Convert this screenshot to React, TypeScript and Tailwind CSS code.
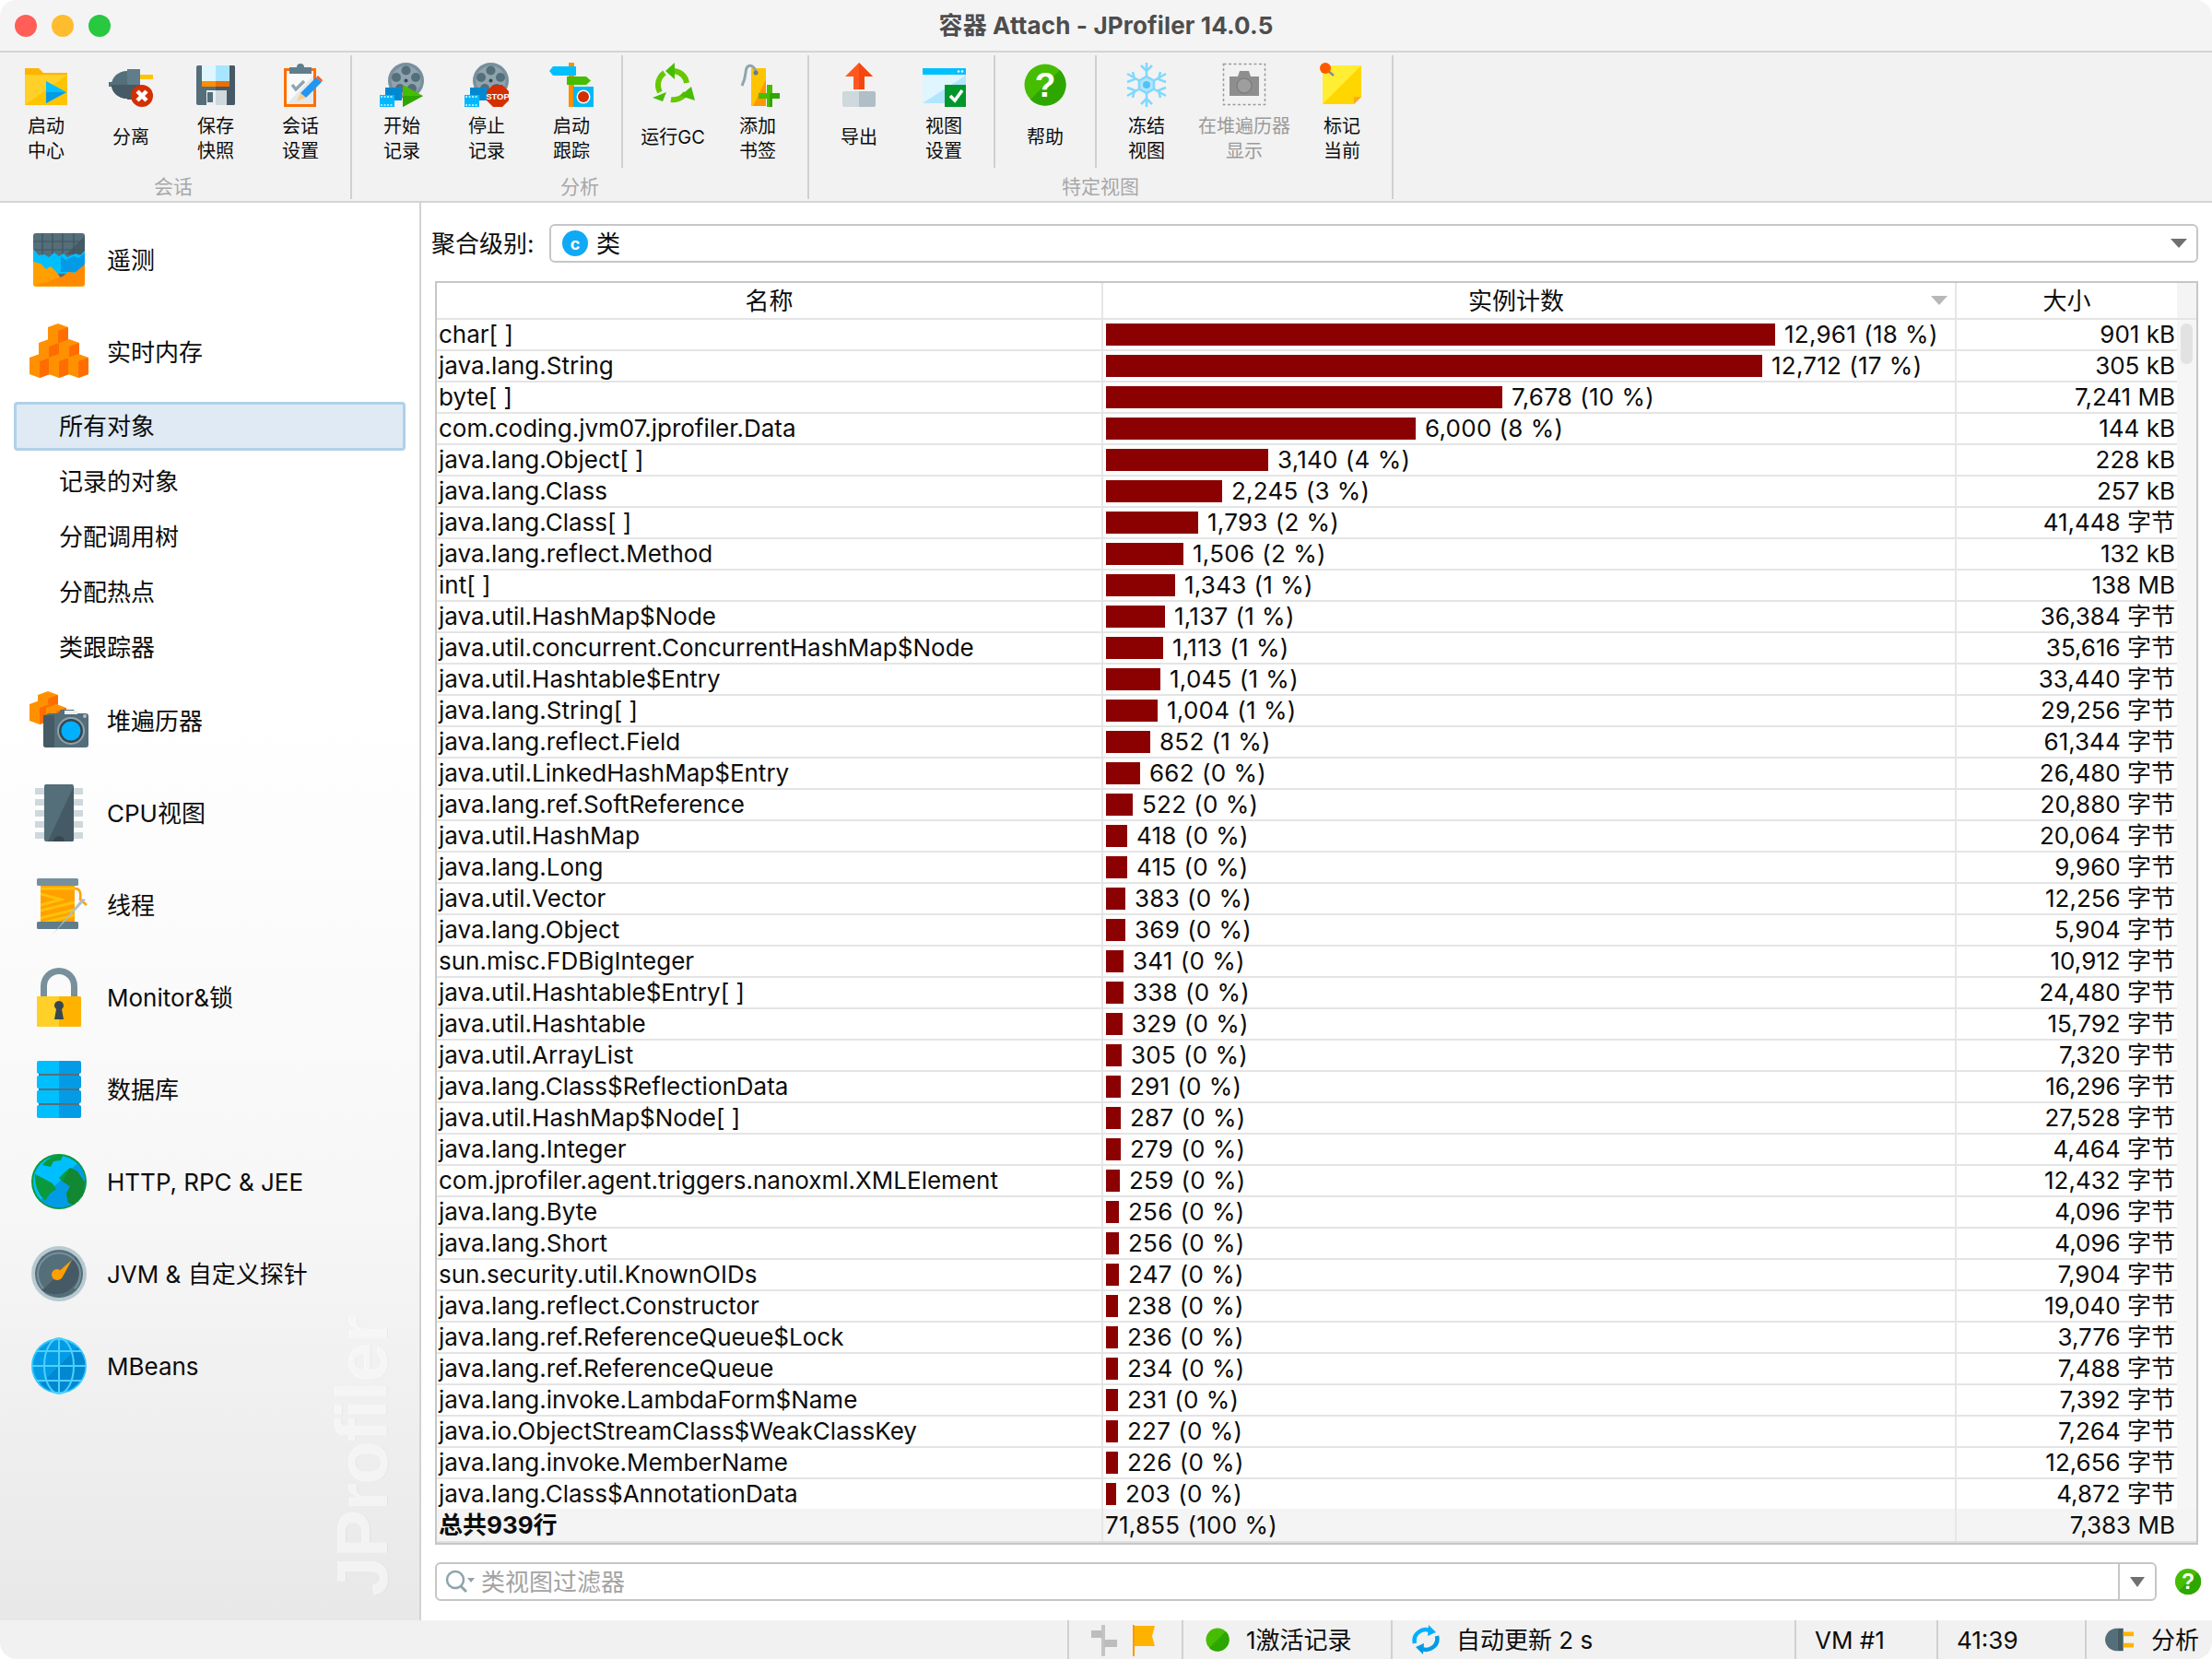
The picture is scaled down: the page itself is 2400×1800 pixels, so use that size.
import React from 'react';

const Folder = () => (
  <svg viewBox="0 0 48 48" className="w-12 h-12">
    <path d="M1 6h15l5 5h26v35H1z" fill="#ffb300" />
    <path d="M1 13h46v33H1z" fill="#ffd028" />
    <path d="M47 13v33H1z" fill="#ffc400" />
    <path d="M24 20l22 12-22 12z" fill="#00bfff" />
    <path d="M24 44l22-12H24z" fill="#039be5" />
  </svg>
);

const Unplug = () => (
  <svg viewBox="0 0 48 48" className="w-12 h-12">
    <path d="M34 13h14v5H34z" fill="#ffc400" />
    <path d="M0 21h4v5H0z" fill="#546e7a" />
    <path d="M20 9C10 9 3 16 3 24s7 15 17 15z" fill="#546e7a" />
    <path d="M3 24c0 8 7 15 17 15V24z" fill="#455a64" />
    <path d="M20 7h14v33H20z" fill="#607d8b" />
    <path d="M20 24h14v16H20z" fill="#455a64" />
    <circle cx="36" cy="36" r="12" fill="#d32f00" />
    <path d="M31 31l10 10M41 31L31 41" stroke="#fff" strokeWidth="4.5" />
  </svg>
);

const Floppy = () => (
  <svg viewBox="0 0 48 48" className="w-12 h-12">
    <path d="M5 3h38a2 2 0 0 1 2 2v39a2 2 0 0 1-2 2H5a2 2 0 0 1-2-2V5a2 2 0 0 1 2-2z" fill="#546e7a" />
    <path d="M24 3h19a2 2 0 0 1 2 2v39a2 2 0 0 1-2 2H24z" fill="#455a64" />
    <path d="M9 3h15v17H9z" fill="#dff6ff" />
    <path d="M24 3h15v17H24z" fill="#a8e6ff" />
    <path d="M9 20h15v6H9z" fill="#ff8f00" />
    <path d="M24 20h15v6H24z" fill="#ef6c00" />
    <path d="M14 30h22v16H14z" fill="#cfd8dc" />
    <path d="M14 30h10v16H14z" fill="#eceff1" />
    <path d="M15 32h6v11h-6z" fill="#546e7a" />
  </svg>
);

const Clipboard = () => (
  <svg viewBox="0 0 48 48" className="w-12 h-12">
    <path d="M6 6h35v42H6z" fill="#ff6f00" />
    <path d="M9 9h29v36H9z" fill="#fafafa" />
    <path d="M38 14v31H9z" fill="#e6e9eb" />
    <path d="M12 5h8a4 4 0 0 1 8 0h8v7H12z" fill="#607d8b" />
    <path d="M15 24l4 5 9-9" fill="none" stroke="#90a4ae" strokeWidth="3.5" />
    <path d="M24 33l17-17 6 5-17 17z" fill="#2196f3" />
    <path d="M41 16l2-2 5 5-1 2z" fill="#ff5722" />
    <path d="M24 33l6 5-10 4z" fill="#ffcc80" />
  </svg>
);

const Reel = () => (
  <g>
    <circle cx="28.5" cy="19.5" r="19.5" fill="#78909c" />
    <circle cx="28.5" cy="19.5" r="16" fill="#90a4ae" />
    <circle cx="28.5" cy="8.5" r="5" fill="#546e7a" />
    <circle cx="18" cy="16" r="5" fill="#546e7a" />
    <circle cx="39" cy="16" r="5" fill="#546e7a" />
    <circle cx="22" cy="28" r="5" fill="#546e7a" />
    <circle cx="35" cy="28" r="5" fill="#546e7a" />
    <circle cx="28.5" cy="19.5" r="2" fill="#37474f" />
    <path d="M6 27h18v14H6z" fill="#0288d1" />
    <path d="M0 35h16v13H0z" fill="#00b8ff" />
    <path d="M1 37h14M1 46h14" stroke="#e1f5fe" strokeWidth="1.5" strokeDasharray="2 1.5" />
  </g>
);

const RecStart = () => (
  <svg viewBox="0 0 48 48" className="w-12 h-12">
    <Reel />
    <path d="M25 24l22 12-22 12z" fill="#46bd00" />
    <path d="M25 48l22-12H25z" fill="#2ea600" />
  </svg>
);

const RecStop = () => (
  <svg viewBox="0 0 48 48" className="w-12 h-12">
    <Reel />
    <path d="M31 24h10l7 7v10l-7 7H31l-7-7V31z" fill="#d32f00" />
    <text x="36" y="39.5" textAnchor="middle" fontSize="9.5" fontWeight="700" fill="#fff" fontFamily="Liberation Sans">STOP</text>
  </svg>
);

const Signpost = () => (
  <svg viewBox="0 0 48 48" className="w-12 h-12">
    <path d="M21 0h6v48h-6z" fill="#ff8f00" />
    <path d="M4 4h25v10H4l-4-5z" fill="#00bfff" />
    <path d="M19 15h21l5 4.500-5 4.500H19z" fill="#46bd00" />
    <path d="M26 26h22v22H26z" fill="#00b8f5" />
    <circle cx="37" cy="37" r="7.500" fill="#fff" />
    <circle cx="37" cy="37" r="6" fill="#d32f00" />
  </svg>
);

const RunGc = () => (
  <svg viewBox="0 0 48 48" className="w-12 h-12" fill="none">
    <path d="M25 9a15 15 0 0 1 14 13" stroke="#66c800" strokeWidth="6" />
    <path d="M22 40a16 16 0 0 0 16-7" stroke="#66c800" strokeWidth="6" />
    <path d="M15 11a16 16 0 0 0-5 21" stroke="#66c800" strokeWidth="6" />
    <path d="M16 9l10-9v18z" fill="#46bd00" />
    <path d="M48 41l-4-15-12 10z" fill="#46bd00" />
    <path d="M2 38l15-6-4 10z" fill="#46bd00" />
  </svg>
);

const Bookmark = () => (
  <svg viewBox="0 0 48 48" className="w-12 h-12">
    <path d="M17 6h16v41H17z" fill="#ffc400" />
    <path d="M33 18v29H19z" fill="#ff9800" />
    <path d="M22 10C20 2 14 2 12 6c-2 5 0 10-5 19" fill="none" stroke="#90a4ae" strokeWidth="3" />
    <circle cx="22" cy="11" r="2.500" fill="#607d8b" />
    <path d="M34 24h6v9h9v6h-9v9h-6v-9h-9v-6h9z" fill="#46bd00" />
    <path d="M37 33h12v6h-9v9h-3z" fill="#2ea600" />
  </svg>
);

const ExportIcon = () => (
  <svg viewBox="0 0 48 48" className="w-12 h-12">
    <path d="M24 0l15 15h-9v14H18V15H9z" fill="#ff5722" />
    <path d="M24 0l15 15h-9v14h-6z" fill="#f4470f" />
    <path d="M6 33a2 2 0 0 1 2-2h16v17H8a2 2 0 0 1-2-2z" fill="#cfd8dc" />
    <path d="M24 31h16a2 2 0 0 1 2 2v13a2 2 0 0 1-2 2H24z" fill="#b0bec5" />
  </svg>
);

const ViewSettings = () => (
  <svg viewBox="0 0 48 48" className="w-12 h-12">
    <path d="M1 6h48v38H1z" fill="#dff6ff" />
    <path d="M49 13v31H1z" fill="#b3e5fc" />
    <path d="M1 6h48v7H1z" fill="#00bfff" />
    <circle cx="40" cy="9.500" r="1.200" fill="#fff" />
    <circle cx="44" cy="9.500" r="1.200" fill="#fff" />
    <path d="M25 24h24v24H25z" fill="#00962e" />
    <path d="M31 36l5 5 8-11" fill="none" stroke="#fff" strokeWidth="3.500" />
  </svg>
);

const Help = ({ className }: { className: string }) => (
  <svg viewBox="0 0 48 48" className={className}>
    <circle cx="24" cy="24" r="22.500" fill="#46bd00" />
    <path d="M40 8A22.500 22.500 0 0 1 8 40z" fill="#2ea600" />
    <text x="24" y="37" textAnchor="middle" fontSize="37" fontWeight="700" fill="#fff" fontFamily="Liberation Sans">?</text>
  </svg>
);

const Snow = () => (
  <svg viewBox="0 0 48 48" className="w-12 h-12" fill="none" stroke="#80d8ff" strokeWidth="2.500">
    <path d="M24 0v48M3 12l42 24M45 12L3 36" />
    <path d="M18 3l6 6 6-6M18 45l6-6 6 6M3 21l8-3-2-8M45 21l-8-3 2-8M3 27l8 3-2 8M45 27l-8 3 2 8" />
    <path d="M24 15l8 4.500v9L24 33l-8-4.500v-9z" fill="#b3e5fc" />
    <circle cx="24" cy="24" r="4" fill="#4fc3f7" stroke="none" />
  </svg>
);

const CameraOff = () => (
  <svg viewBox="0 0 48 48" className="w-12 h-12">
    <rect x="1.500" y="1.500" width="45" height="44" fill="none" stroke="#9a9a9a" strokeWidth="1.500" strokeDasharray="3 2.500" />
    <path d="M8 15h9l2-6h10l2 6h9v21H8z" fill="#8e8e8e" />
    <circle cx="24" cy="25" r="8" fill="#9e9e9e" stroke="#808080" strokeWidth="1.500" />
  </svg>
);

const Note = () => (
  <svg viewBox="0 0 48 48" className="w-12 h-12">
    <path d="M3 3h42v34l-8 8H3z" fill="#ffee33" />
    <path d="M45 3v34l-8 8H3z" fill="#ffd600" />
    <path d="M37 37h8l-8 8z" fill="#ffa726" />
    <path d="M8 8l7 6" stroke="#78909c" strokeWidth="2.500" />
    <circle cx="6" cy="6" r="6" fill="#ff5a00" />
  </svg>
);

const Telemetry = () => (
  <svg viewBox="0 0 64 64" className="w-16 h-16">
    <path d="M7 3h50a3 3 0 0 1 3 3v51a3 3 0 0 1-3 3H7a3 3 0 0 1-3-3V6a3 3 0 0 1 3-3z" fill="#546e7a" />
    <path d="M60 6v20H40z" fill="#455a64" />
    <path d="M14 3v26M25 3v26M36 3v26M48 3v26M4 12h56M4 21h56" stroke="#3f545e" strokeWidth="1.200" />
    <path d="M4 20l6 7 6-1 5 3 6-5 5 4 5-3 4 4 9-4 5 2 5-5v25H4z" fill="#00bfff" />
    <path d="M34 28l5 4 9-4 5 2 7-5v20H34z" fill="#039be5" />
    <path d="M4 34l8 2 6 6 5-3 7 7 6 9 6-6 7 1 8-7 3-7v22a3 3 0 0 1-3 3H7a3 3 0 0 1-3-3z" fill="#ffa000" />
    <path d="M60 37v20a3 3 0 0 1-3 3H6L36 50l6-5 7 1z" fill="#ff8a00" />
  </svg>
);

const Cube = ({ x, y }: { x: number; y: number }) => (
  <g transform={`translate(${x} ${y})`}>
    <path d="M11 0l11 4v18l-11 4-11-4V4z" fill="#ff9100" />
    <path d="M22 4v18l-11 4V8z" fill="#ff6d00" />
  </g>
);

const Memory = () => (
  <svg viewBox="0 0 64 64" className="w-16 h-16">
    <Cube x={20} y={1} />
    <Cube x={10} y={18} />
    <Cube x={32} y={18} />
    <Cube x={0} y={34} />
    <Cube x={21} y={34} />
    <Cube x={42} y={34} />
  </svg>
);

const Heap = () => (
  <svg viewBox="0 0 64 64" className="w-16 h-16">
    <Cube x={9} y={0} />
    <Cube x={0} y={10} />
    <Cube x={18} y={14} />
    <path d="M18 27a3 3 0 0 1 3-3h10l3-4h14l3 4h10a3 3 0 0 1 3 3v31a3 3 0 0 1-3 3H18a3 3 0 0 1-3-3V27z" fill="#546e7a" />
    <path d="M15 26h12v35h-9a3 3 0 0 1-3-3z" fill="#455a64" />
    <path d="M38 21h14v4H38z" fill="#eceff1" />
    <circle cx="45" cy="43" r="15" fill="#90a4ae" />
    <circle cx="45" cy="43" r="13" fill="#37474f" />
    <circle cx="45" cy="43" r="10.500" fill="#00b0ff" />
    <circle cx="60" cy="27" r="2" fill="#b0bec5" />
  </svg>
);

const Chip = () => (
  <svg viewBox="0 0 64 64" className="w-16 h-16">
    <path d="M6 5h10v7H6zM6 17h10v7H6zM6 29h10v7H6zM6 41h10v7H6zM6 53h10v7H6zM48 5h10v7H48zM48 17h10v7H48zM48 29h10v7H48zM48 41h10v7H48zM48 53h10v7H48z" fill="#cfd8dc" />
    <path d="M18 1h28a2 2 0 0 1 2 2v58a2 2 0 0 1-2 2H18a2 2 0 0 1-2-2V3a2 2 0 0 1 2-2z" fill="#546e7a" />
    <path d="M48 3v58a2 2 0 0 1-2 2H20z" fill="#455a64" />
    <path d="M26 63a6 6 0 0 1 12 0z" fill="#37474f" />
  </svg>
);

const Spool = () => (
  <svg viewBox="0 0 64 64" className="w-16 h-16">
    <path d="M12 10h37v48H12z" fill="#ffa000" />
    <path d="M12 14l37 0M12 20l22 6-22 6M12 38l37-9M12 46l37-9M12 52l37-9" stroke="#ffc107" strokeWidth="3" fill="none" />
    <rect x="8" y="3" width="45" height="8" rx="1.500" fill="#78909c" />
    <rect x="8" y="50" width="45" height="8" rx="1.500" fill="#607d8b" />
    <path d="M49 14c6 0 7 5 6 12l7 6" fill="none" stroke="#ffa000" strokeWidth="2.500" />
    <path d="M25 64l36-38-4-1z" fill="#b0bec5" />
  </svg>
);

const Lock = () => (
  <svg viewBox="0 0 64 64" className="w-16 h-16">
    <path d="M12 32V20a20 20 0 0 1 40 0v12h-7V20a13 13 0 0 0-26 0v12z" fill="#78909c" />
    <rect x="8" y="31" width="48" height="33" rx="1.500" fill="#ffb300" />
    <path d="M9.500 31H32v33H9.500A1.500 1.500 0 0 1 8 62.500V32.500A1.500 1.500 0 0 1 9.500 31z" fill="#ffd028" />
    <path d="M27 41a5 5 0 1 1 8 4l2 11H27l2-11a5 5 0 0 1-2-4z" fill="#37474f" />
  </svg>
);

const Database = () => (
  <svg viewBox="0 0 64 64" className="w-16 h-16">
    <path d="M10 1h44v62H10z" fill="#546e7a" />
    {[1, 17, 33, 49].map((y) => (
      <g key={y}>
        <path d={`M8 ${y + 2}a2 2 0 0 1 2-2h22v14H10a2 2 0 0 1-2-2z`} fill="#00bfff" />
        <path d={`M32 ${y}h22a2 2 0 0 1 2 2v10a2 2 0 0 1-2 2H32z`} fill="#039be5" />
      </g>
    ))}
  </svg>
);

const Globe = () => (
  <svg viewBox="0 0 64 64" className="w-16 h-16">
    <circle cx="32" cy="32" r="30" fill="#0a9a3c" />
    <circle cx="32" cy="32" r="28" fill="#00bfff" />
    <path d="M52 12A28 28 0 0 1 12 52z" fill="#039be5" />
    <path d="M14 14c6-8 14-11 22-10l-2 5-8 1-3 6-9-2zM6 24l10 5 9 5 4 6-7 5-5 8-5-6C9 42 5 34 6 24zM38 22l6-5 8 4 8 12-2 14-10 10-6-2-2-10 4-8-8-5-4-4z" fill="#0a9a3c" />
    <path d="M44 17l8 4 8 12-2 14-10 10-6-2-2-10 4-8-8-5z" fill="#128833" />
  </svg>
);

const Gauge = () => (
  <svg viewBox="0 0 64 64" className="w-16 h-16">
    <circle cx="32" cy="32" r="30" fill="#b9c9d0" />
    <circle cx="32" cy="32" r="26" fill="#546e7a" />
    <path d="M50 14A26 26 0 0 1 14 50z" fill="#455a64" />
    <path d="M15 48a23 23 0 1 1 34 0" fill="none" stroke="#78909c" strokeWidth="2" />
    <path d="M46 17L35 37l-6-5z" fill="#ffa000" />
    <circle cx="30" cy="33" r="6" fill="#ffa000" />
  </svg>
);

const Beans = () => (
  <svg viewBox="0 0 64 64" className="w-16 h-16">
    <circle cx="32" cy="32" r="30" fill="#29c5ff" />
    <circle cx="32" cy="32" r="28" fill="#039be5" />
    <path d="M52 12A28 28 0 0 1 12 52z" fill="#0288d1" />
    <g fill="none" stroke="#4dd0ff" strokeWidth="2">
      <path d="M32 2v60M2 32h60M7 16h50M7 48h50" />
      <ellipse cx="32" cy="32" rx="16" ry="30" />
    </g>
  </svg>
);

const Tool = ({ label, icon, wide, muted }: { label: string[]; icon: React.ReactNode; wide?: boolean; muted?: boolean }) => (
  <div className={`flex flex-col items-center pt-2 ${wide ? 'w-[120px]' : 'w-[92px]'}`}>
    <div className="w-12 h-12">{icon}</div>
    <div
      className={`h-[54px] mt-2 flex flex-col justify-center items-center text-[20px] leading-[27px] ${
        label.length === 1 ? 'pb-[3px]' : ''
      } ${muted ? 'text-[#9a9a9a]' : 'text-[#0c0c0c]'}`}
    >
      {label.map((l) => (
        <span key={l}>{l}</span>
      ))}
    </div>
  </div>
);

const ToolSep = () => <div className="w-[2px] h-[122px] bg-[#d0d0d0] mx-2" />;

const GroupSep = () => <div className="w-[2px] h-[156px] bg-[#d0d0d0] ml-2 mr-2" />;

const GroupLabel = ({ text }: { text: string }) => (
  <div className="h-[34px] pt-1 text-center text-[21px] leading-[34px] text-[#a8a8a8]">{text}</div>
);

const Toolbar = () => (
  <div className="h-[163px] pt-[3px] pl-[4px] flex items-start bg-[#f2f2f2] border-b-2 border-[#d4d4d4]">
    <div>
      <div className="flex h-[122px]">
        <Tool label={['启动', '中心']} icon={<Folder />} />
        <Tool label={['分离']} icon={<Unplug />} />
        <Tool label={['保存', '快照']} icon={<Floppy />} />
        <Tool label={['会话', '设置']} icon={<Clipboard />} />
      </div>
      <GroupLabel text="会话" />
    </div>
    <GroupSep />
    <div>
      <div className="flex h-[122px]">
        <Tool label={['开始', '记录']} icon={<RecStart />} />
        <Tool label={['停止', '记录']} icon={<RecStop />} />
        <Tool label={['启动', '跟踪']} icon={<Signpost />} />
        <ToolSep />
        <Tool label={['运行GC']} icon={<RunGc />} />
        <Tool label={['添加', '书签']} icon={<Bookmark />} />
      </div>
      <GroupLabel text="分析" />
    </div>
    <GroupSep />
    <div>
      <div className="flex h-[122px]">
        <Tool label={['导出']} icon={<ExportIcon />} />
        <Tool label={['视图', '设置']} icon={<ViewSettings />} />
        <ToolSep />
        <Tool label={['帮助']} icon={<Help className="w-12 h-12" />} />
        <ToolSep />
        <Tool label={['冻结', '视图']} icon={<Snow />} />
        <Tool wide muted label={['在堆遍历器', '显示']} icon={<CameraOff />} />
        <Tool label={['标记', '当前']} icon={<Note />} />
      </div>
      <GroupLabel text="特定视图" />
    </div>
    <GroupSep />
  </div>
);

const NavItem = ({ icon, label }: { icon: React.ReactNode; label: string }) => (
  <div className="h-[100px] pl-8 flex items-center gap-5 text-[26px] text-[#0c0c0c]">
    <div className="w-16 h-16">{icon}</div>
    <span>{label}</span>
  </div>
);

const SubItem = ({ label, active }: { label: string; active?: boolean }) => (
  <div className="h-[60px] flex items-center">
    <div
      className={`w-[425px] h-[53px] ml-[15px] pl-[46px] flex items-center text-[26px] text-[#0c0c0c] rounded-[4px] border-[3px] ${
        active ? 'bg-[#dfeaf4] border-[#b0d0e8]' : 'border-transparent'
      }`}
    >
      {label}
    </div>
  </div>
);

const Sidebar = () => (
  <div className="relative w-[458px] pt-3 border-r-2 border-[#d2d2d2] bg-linear-to-b from-white from-35% via-[#f7f7f7] via-70% to-[#e8e8e8] overflow-hidden">
    <NavItem icon={<Telemetry />} label="遥测" />
    <NavItem icon={<Memory />} label="实时内存" />
    <SubItem label="所有对象" active />
    <SubItem label="记录的对象" />
    <SubItem label="分配调用树" />
    <SubItem label="分配热点" />
    <SubItem label="类跟踪器" />
    <NavItem icon={<Heap />} label="堆遍历器" />
    <NavItem icon={<Chip />} label="CPU视图" />
    <NavItem icon={<Spool />} label="线程" />
    <NavItem icon={<Lock />} label="Monitor&锁" />
    <NavItem icon={<Database />} label="数据库" />
    <NavItem icon={<Globe />} label="HTTP, RPC & JEE" />
    <NavItem icon={<Gauge />} label="JVM & 自定义探针" />
    <NavItem icon={<Beans />} label="MBeans" />
    <div className="absolute left-[350px] bottom-[26px] [writing-mode:vertical-rl] rotate-180 text-[78px] leading-[86px] tracking-[-1.500px] font-bold font-['Liberation_Sans',sans-serif] text-white/60 [text-shadow:0_1px_1px_rgba(0,0,0,0.04)]">
      JProfiler
    </div>
  </div>
);

const rows: [string, number, string, string][] = [
  ['char[ ]', 12961, '18', '901 kB'],
  ['java.lang.String', 12712, '17', '305 kB'],
  ['byte[ ]', 7678, '10', '7,241 MB'],
  ['com.coding.jvm07.jprofiler.Data', 6000, '8', '144 kB'],
  ['java.lang.Object[ ]', 3140, '4', '228 kB'],
  ['java.lang.Class', 2245, '3', '257 kB'],
  ['java.lang.Class[ ]', 1793, '2', '41,448 字节'],
  ['java.lang.reflect.Method', 1506, '2', '132 kB'],
  ['int[ ]', 1343, '1', '138 MB'],
  ['java.util.HashMap$Node', 1137, '1', '36,384 字节'],
  ['java.util.concurrent.ConcurrentHashMap$Node', 1113, '1', '35,616 字节'],
  ['java.util.Hashtable$Entry', 1045, '1', '33,440 字节'],
  ['java.lang.String[ ]', 1004, '1', '29,256 字节'],
  ['java.lang.reflect.Field', 852, '1', '61,344 字节'],
  ['java.util.LinkedHashMap$Entry', 662, '0', '26,480 字节'],
  ['java.lang.ref.SoftReference', 522, '0', '20,880 字节'],
  ['java.util.HashMap', 418, '0', '20,064 字节'],
  ['java.lang.Long', 415, '0', '9,960 字节'],
  ['java.util.Vector', 383, '0', '12,256 字节'],
  ['java.lang.Object', 369, '0', '5,904 字节'],
  ['sun.misc.FDBigInteger', 341, '0', '10,912 字节'],
  ['java.util.Hashtable$Entry[ ]', 338, '0', '24,480 字节'],
  ['java.util.Hashtable', 329, '0', '15,792 字节'],
  ['java.util.ArrayList', 305, '0', '7,320 字节'],
  ['java.lang.Class$ReflectionData', 291, '0', '16,296 字节'],
  ['java.util.HashMap$Node[ ]', 287, '0', '27,528 字节'],
  ['java.lang.Integer', 279, '0', '4,464 字节'],
  ['com.jprofiler.agent.triggers.nanoxml.XMLElement', 259, '0', '12,432 字节'],
  ['java.lang.Byte', 256, '0', '4,096 字节'],
  ['java.lang.Short', 256, '0', '4,096 字节'],
  ['sun.security.util.KnownOIDs', 247, '0', '7,904 字节'],
  ['java.lang.reflect.Constructor', 238, '0', '19,040 字节'],
  ['java.lang.ref.ReferenceQueue$Lock', 236, '0', '3,776 字节'],
  ['java.lang.ref.ReferenceQueue', 234, '0', '7,488 字节'],
  ['java.lang.invoke.LambdaForm$Name', 231, '0', '7,392 字节'],
  ['java.io.ObjectStreamClass$WeakClassKey', 227, '0', '7,264 字节'],
  ['java.lang.invoke.MemberName', 226, '0', '12,656 字节'],
  ['java.lang.Class$AnnotationData', 203, '0', '4,872 字节'],
];

const Row = ({ name, count, pct, size }: { name: string; count: number; pct: string; size: string }) => (
  <div className="flex-1 min-h-0 flex border-b-2 border-[#e4e4e4] last:border-b-0 text-[26px] leading-none text-[#0c0c0c]">
    <div className="w-[723px] pl-[2px] flex items-center border-r-2 border-[#e6e6e6] whitespace-nowrap">{name}</div>
    <div className="w-[926px] pl-[3px] flex items-center gap-[10px] border-r-2 border-[#e6e6e6] whitespace-nowrap">
      <div className="h-6 bg-[#8b0000]" style={{ width: Math.round((count / 12961) * 726) }} />
      <span className="tracking-[0.25px] [word-spacing:0.5px]">
        {count.toLocaleString('en-US')} ({pct} %)
      </span>
    </div>
    <div className="w-[239px] pr-[2px] flex items-center justify-end whitespace-nowrap">{size}</div>
  </div>
);

const Table = () => (
  <div className="h-[1371px] flex flex-col border-2 border-[#c6c6c6] mt-5">
    <div className="h-10 flex border-b-2 border-[#e4e4e4] text-[26px] text-[#0c0c0c]">
      <div className="w-[723px] flex items-center justify-center border-r-2 border-[#e6e6e6]">名称</div>
      <div className="relative w-[926px] pr-[28px] flex items-center justify-center border-r-2 border-[#e6e6e6]">
        实例计数
        <div className="absolute right-[8px] top-[14px] w-0 h-0 border-x-[9px] border-x-transparent border-t-[10px] border-t-[#b8b8b8]" />
      </div>
      <div className="w-[239px] flex items-center justify-center">大小</div>
      <div className="flex-1 bg-[#f4f4f4]" />
    </div>
    <div className="h-[1290px] flex">
      <div className="w-[1888px] flex flex-col">
        {rows.map((r) => (
          <Row key={r[0]} name={r[0]} count={r[1]} pct={r[2]} size={r[3]} />
        ))}
      </div>
      <div className="flex-1 bg-[#f6f6f6] px-[4px] pt-[4px]">
        <div className="h-[44px] rounded-[6px] bg-[#e2e2e2]" />
      </div>
    </div>
    <div className="flex-1 flex bg-[#f4f4f4] border-b-2 border-[#e0e0e0] text-[26px] leading-none text-[#0c0c0c]">
      <div className="w-[723px] pl-[2px] pt-[1px] flex items-center font-bold border-r-2 border-[#e6e6e6]">总共939行</div>
      <div className="w-[926px] pl-[2px] pt-[1px] flex items-center tracking-[0.25px] [word-spacing:0.5px] border-r-2 border-[#e6e6e6]">71,855 (100 %)</div>
      <div className="w-[239px] pr-[2px] pt-[1px] flex items-center justify-end">7,383 MB</div>
    </div>
  </div>
);

const StatusBar = () => (
  <div className="h-[42px] flex justify-end bg-[#f1f1f1] text-[26px] text-[#0c0c0c]">
    <div className="w-[124px] pl-[22px] flex items-center gap-[16px] border-l-2 border-[#d0d0d0]">
      <svg viewBox="0 0 30 36" className="w-[30px] h-[36px]">
        <path d="M13 2h4v34h-4z" fill="#c4c4c4" />
        <path d="M2 8h12v8H2zM16 18h14v8H16z" fill="#bdbdbd" />
      </svg>
      <svg viewBox="0 0 26 36" className="w-[26px] h-[36px]">
        <path d="M1 2h2v34H1z" fill="#ff9800" />
        <path d="M3 3h22l-3 11 3 11H3z" fill="#ffb300" />
      </svg>
    </div>
    <div className="w-[227px] pl-[24px] flex items-center gap-[18px] border-l-2 border-[#d0d0d0]">
      <svg viewBox="0 0 26 26" className="w-[26px] h-[26px]">
        <circle cx="13" cy="13" r="12.500" fill="#46bd00" />
        <path d="M22 4A12.500 12.500 0 0 1 4 22z" fill="#2ea600" />
      </svg>
      <span>1激活记录</span>
    </div>
    <div className="w-[438px] pl-[20px] flex items-center gap-[17px] border-l-2 border-[#d0d0d0]">
      <svg viewBox="0 0 32 32" className="w-[32px] h-[32px]" fill="none">
        <path d="M4 20a12 12 0 0 1 18-13" stroke="#00b0ff" strokeWidth="4.500" />
        <path d="M28 12a12 12 0 0 1-18 13" stroke="#039be5" strokeWidth="4.500" />
        <path d="M19 0l8 8-9 4z" fill="#00b0ff" />
        <path d="M13 32l-8-8 9-4z" fill="#039be5" />
      </svg>
      <span>自动更新 2 s</span>
    </div>
    <div className="w-[154px] pl-[20px] flex items-center border-l-2 border-[#d0d0d0]">VM #1</div>
    <div className="w-[161px] pl-[20px] flex items-center border-l-2 border-[#d0d0d0]">41:39</div>
    <div className="w-[138px] pl-[20px] flex items-center gap-[18px] border-l-2 border-[#d0d0d0]">
      <svg viewBox="0 0 34 32" className="w-[32px] h-[32px]">
        <path d="M14 3C5 3 0 10 0 16s5 13 14 13z" fill="#546e7a" />
        <path d="M14 3h7v26h-7z" fill="#455a64" />
        <path d="M21 7h12v5H21zM21 20h12v5H21z" fill="#ffb300" />
      </svg>
      <span>分析</span>
    </div>
  </div>
);

export default function App() {
  return (
    <div className="w-[2400px] h-[1800px] flex flex-col overflow-hidden rounded-[18px] bg-white font-[Inter,'Noto_Sans_CJK_SC',sans-serif]">
      <div className="relative h-[57px] flex items-center justify-center bg-[#f4f4f5] border-b-2 border-[#d4d4d4]">
        <div className="absolute left-4 flex gap-4">
          <div className="w-6 h-6 rounded-full bg-[#ff5f57]" />
          <div className="w-6 h-6 rounded-full bg-[#febc2e]" />
          <div className="w-6 h-6 rounded-full bg-[#28c840]" />
        </div>
        <span className="text-[26px] font-bold tracking-[0.15px] text-[#4d4d4d]">容器 Attach - JProfiler 14.0.5</span>
      </div>
      <Toolbar />
      <div className="h-[1538px] flex">
        <Sidebar />
        <div className="flex-1 pl-[15px] pr-[15px] pt-[23px] bg-white">
          <div className="flex items-center">
            <span className="ml-[-4px] w-[128px] text-[26px] text-[#0c0c0c]">聚合级别:</span>
            <div className="flex-1 h-[42px] pl-[12px] pr-[10px] flex items-center border-2 border-[#c6c6c6] rounded-[6px]">
              <div className="w-7 h-7 rounded-full bg-[#0fa9f5] text-white text-[18px] font-bold flex items-center justify-center">c</div>
              <span className="ml-[9px] text-[26px] text-[#0c0c0c]">类</span>
              <div className="ml-auto w-0 h-0 border-x-[9px] border-x-transparent border-t-[10px] border-t-[#707070]" />
            </div>
          </div>
          <Table />
          <div className="flex items-center mt-[19px] mr-[-4px]">
            <div className="w-[1868px] h-[42px] flex items-center border-2 border-[#c6c6c6] rounded-[6px]">
              <svg viewBox="0 0 32 28" className="ml-[9px] w-[32px] h-[28px]" fill="none">
                <circle cx="11" cy="12" r="9" stroke="#8fa3ad" strokeWidth="2.500" />
                <path d="M17 19l6 6" stroke="#8fa3ad" strokeWidth="3" />
                <path d="M24 10h8l-4 5z" fill="#8fa3ad" />
              </svg>
              <span className="ml-[7px] text-[26px] text-[#a3a3a3]">类视图过滤器</span>
              <div className="ml-auto w-[40px] h-full flex items-center justify-center border-l-2 border-[#c6c6c6]">
                <div className="w-0 h-0 border-x-[8px] border-x-transparent border-t-[11px] border-t-[#707070]" />
              </div>
            </div>
            <Help className="ml-[19px] w-[30px] h-[30px]" />
          </div>
        </div>
      </div>
      <StatusBar />
    </div>
  );
}
